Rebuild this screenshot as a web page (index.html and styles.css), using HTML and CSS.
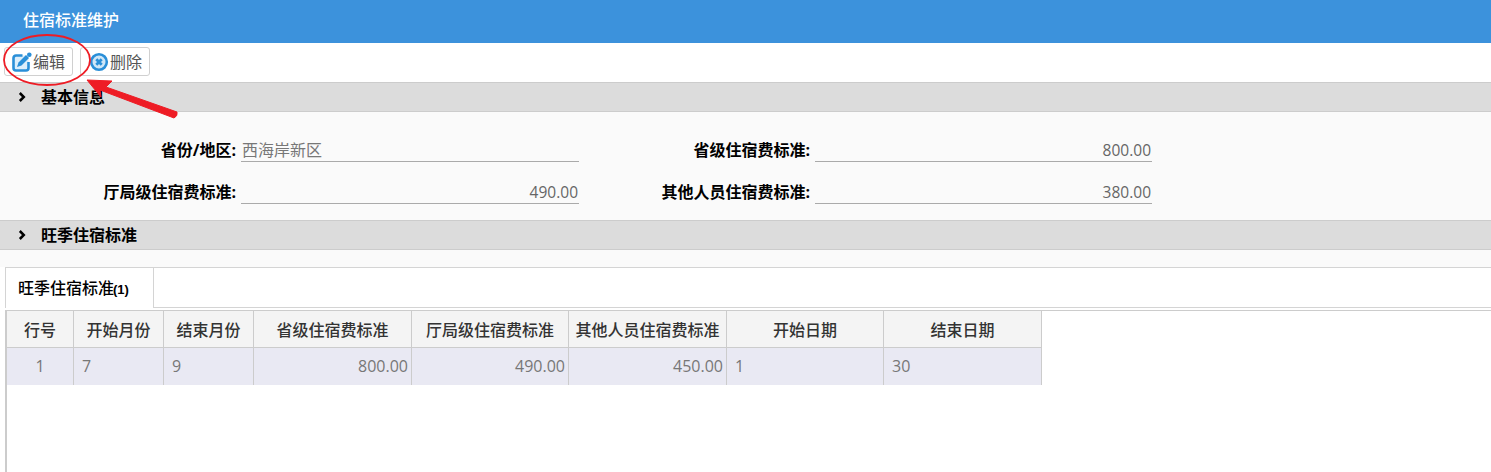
FILE: index.html
```html
<!DOCTYPE html>
<html lang="zh-CN">
<head>
<meta charset="utf-8">
<title>住宿标准维护</title>
<link rel="stylesheet" href="styles.css">
</head>
<body>
<header class="title-bar">住宿标准维护</header>
<div class="toolbar">
  <button class="tool-btn edit-btn">
    <svg class="ico" viewBox="0 0 20 20"><rect x="1.5" y="3.5" width="15" height="15" rx="2.5" fill="#dceefb"/><path d="M10.5 3.5H4a2.5 2.5 0 0 0-2.5 2.5V16A2.5 2.5 0 0 0 4 18.500H14a2.500 2.500 0 0 0 2.500-2.500V10" fill="none" stroke="#2a8fd8" stroke-width="2.6"/><path d="M6.500 10.500l-1.500 4.500 4.500-1.500L17 6l-3-3z" fill="#2a8fd8"/><circle cx="17.300" cy="2.700" r="2.300" fill="#2a8fd8"/></svg>
    <span>编辑</span>
  </button>
  <span class="tool-sep"></span>
  <button class="tool-btn del-btn">
    <svg class="ico" viewBox="0 0 20 20"><circle cx="10" cy="10" r="7.800" fill="#cfe6f7" stroke="#2a8fd8" stroke-width="2.600"/><path d="M7.300 7.300l5.400 5.400M12.700 7.300l-5.400 5.400" stroke="#2a8fd8" stroke-width="2.800"/></svg>
    <span>删除</span>
  </button>
</div>
<section class="sec-bar"><svg class="chev" viewBox="0 0 8 10"><path d="M1.800 1l4 4-4 4" fill="none" stroke="#000" stroke-width="2.500"/></svg><h2>基本信息</h2></section>
<div class="form">
  <label class="lbl">省份/地区:</label><div class="val">西海岸新区</div>
  <label class="lbl">省级住宿费标准:</label><div class="val num">800.00</div>
  <label class="lbl">厅局级住宿费标准:</label><div class="val num">490.00</div>
  <label class="lbl">其他人员住宿费标准:</label><div class="val num">380.00</div>
</div>
<section class="sec-bar"><svg class="chev" viewBox="0 0 8 10"><path d="M1.800 1l4 4-4 4" fill="none" stroke="#000" stroke-width="2.500"/></svg><h2>旺季住宿标准</h2></section>
<div class="spacer"></div>
<div class="panel">
  <div class="tabs"><div class="tab">旺季住宿标准<small>(1)</small></div></div>
  <div class="grid-wrap">
    <table class="grid">
      <colgroup><col class="c1"><col class="c2"><col class="c2"><col class="c3"><col class="c4"><col class="c3"><col class="c4"><col class="c3"></colgroup>
      <thead><tr><th>行号</th><th>开始月份</th><th>结束月份</th><th>省级住宿费标准</th><th>厅局级住宿费标准</th><th>其他人员住宿费标准</th><th>开始日期</th><th>结束日期</th></tr></thead>
      <tbody><tr><td class="ctr">1</td><td>7</td><td>9</td><td class="rt">800.00</td><td class="rt">490.00</td><td class="rt">450.00</td><td>1</td><td>30</td></tr></tbody>
    </table>
  </div>
</div>
<svg class="annot" viewBox="0 0 200 125">
  <ellipse cx="47" cy="60" rx="43" ry="25" fill="none" stroke="#ee1c25" stroke-width="1.800"/>
  <path d="M87 80L112 81L106 87L177 112Q178 116 174 118L100 90L101 97Z" fill="#ee1c25" stroke="#ee1c25" stroke-width="1" stroke-linejoin="round"/>
</svg>
</body>
</html>
```
FILE: styles.css
```css
* { box-sizing: border-box; }
html, body { margin: 0; padding: 0; height: 472px; overflow: hidden; background: #fff; }
body { position: relative; font-family: "Open Sans", "Noto Sans CJK SC", sans-serif; font-size: 16px; color: #666; }
.title-bar { height: 43px; padding-left: 23px; line-height: 40px; background: #3c92dc; color: #fff; font-size: 16px; font-weight: 500; }
.toolbar { height: 39px; padding: 4px 0 0 4px; display: flex; align-items: flex-start; background: #fff; }
.tool-btn { height: 29px; padding: 0 6px 2px 7px; display: flex; align-items: center; gap: 1px; background: #fff; border: 1px solid #d0d0d0; border-radius: 3px; font: inherit; font-size: 16px; color: #555; }
.tool-btn .ico { margin-top: 2px; }
.edit-btn { width: 69px; }
.del-btn { width: 70px; padding-left: 8px; }
.tool-sep { width: 7px; }
.ico { width: 20px; height: 20px; flex: none; }
.sec-bar { height: 30px; display: flex; align-items: center; padding-left: 18px; background: #dcdcdc; border-top: 1px solid #ccc; border-bottom: 1px solid #ccc; }
.sec-bar h2 { margin: 0 0 0 15px; font-size: 16px; font-weight: 700; color: #000; line-height: 1; }
.chev { width: 8px; height: 10px; flex: none; }
.form { height: 108px; padding-top: 23px; background: #fafafa; display: grid; grid-template-columns: 236px 343px 231px 342px; grid-auto-rows: 42px; align-content: start; }
.lbl { font-size: 16px; font-weight: 700; color: #000; text-align: right; line-height: 30px; height: 30px; white-space: nowrap; }
.val { margin-left: 5px; height: 27px; padding: 0 1px; line-height: 30px; border-bottom: 1px solid #aaa; font-size: 16px; color: #777; white-space: nowrap; }
.num { text-align: right; font-size: 15.5px; color: #666; }
.spacer { height: 17px; background: #fafafa; }
.panel { margin-left: 5px; height: 206px; }
.tabs { height: 41px; border-top: 1px solid #d4d4d4; border-bottom: 1px solid #d4d4d4; background: #fff; }
.tab { width: 149px; height: 40px; line-height: 40px; padding-left: 12px; background: #fff; border-left: 1px solid #d4d4d4; border-right: 1px solid #d4d4d4; font-size: 16px; font-weight: 500; color: #000; white-space: nowrap; }
.tab small { margin-left: -1px; font-size: 13px; font-family: "Liberation Sans", sans-serif; font-weight: 700; }
.grid-wrap { margin-top: 2px; height: 163px; border-left: 2px solid #ccc; border-top: 1px solid #ccc; }
.grid { border-collapse: separate; border-spacing: 0; table-layout: fixed; width: 1035px; }
.c1 { width: 67px; }
.c2 { width: 90px; }
.c3 { width: 158px; }
.c4 { width: 157px; }
.grid th { height: 37px; padding: 0; background: #f4f4f4; border-right: 1px solid #ccc; border-bottom: 1px solid #ccc; font-size: 16px; font-weight: 500; color: #333; text-align: center; }
.grid td { height: 37px; padding: 0 3px 1px 8px; background: #e9e9f3; border-right: 1px solid #ccc; font-size: 16px; color: #777; }
.grid td.ctr { text-align: center; padding: 0 0 1px; }
.grid td.rt { text-align: right; }
.annot { position: absolute; left: 0; top: 0; width: 200px; height: 125px; pointer-events: none; }
```
